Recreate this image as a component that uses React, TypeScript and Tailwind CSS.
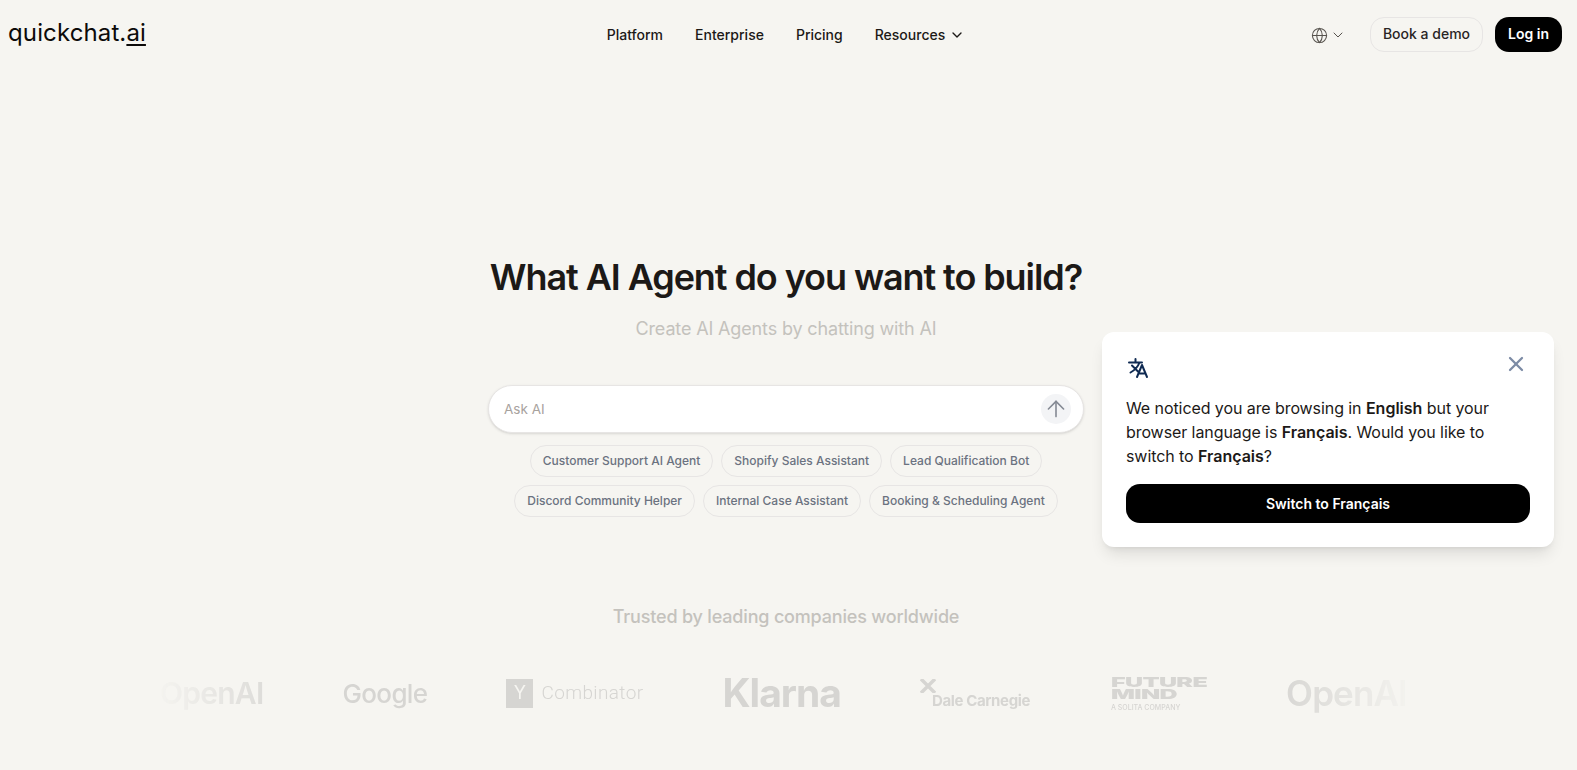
import { ArrowUp, ChevronDown, Globe, X } from "lucide-react";

const navLinks = ["Platform", "Enterprise", "Pricing"];

const promptRows = [
  ["Customer Support AI Agent", "Shopify Sales Assistant", "Lead Qualification Bot"],
  ["Discord Community Helper", "Internal Case Assistant", "Booking & Scheduling Agent"],
];

function Header() {
  return (
    <header className="grid h-[70px] grid-cols-[1fr_auto_1fr] items-center pl-2 pr-[15px]">
      <div className="-mt-1 text-[24px] leading-none tracking-[0.005em] text-[#0c0a09]">
        quickchat.<span className="underline decoration-2 underline-offset-[3px]">ai</span>
      </div>
      <nav className="ml-0.5 flex items-center gap-8 text-sm font-medium text-[#1c1917]">
        {navLinks.map((link) => (
          <a key={link}>{link}</a>
        ))}
        <a className="flex items-center gap-1">
          Resources
          <ChevronDown className="h-4 w-4" />
        </a>
      </nav>
      <div className="flex items-center justify-end">
        <div className="mr-6 flex items-center gap-0.5 text-[#57534e]">
          <Globe className="h-[17px] w-[17px]" strokeWidth={1.5} />
          <ChevronDown className="h-4 w-4" strokeWidth={1.5} />
        </div>
        <button
          type="button"
          className="-mt-0.5 mr-3 h-[35px] rounded-[14px] border border-[#e7e5e4] px-3 text-sm font-medium text-[#292524]"
        >
          Book a demo
        </button>
        <button
          type="button"
          className="-mt-0.5 h-[35px] rounded-[14px] bg-black px-[13px] text-sm font-semibold text-white"
        >
          Log in
        </button>
      </div>
    </header>
  );
}

function Hero() {
  return (
    <section className="mr-[5px] mt-[187px] flex flex-col items-center">
      <h1 className="text-[36px] font-semibold leading-10 tracking-[-0.03em] text-[#1c1917]">
        What AI Agent do you want to build?
      </h1>
      <p className="mt-[18px] text-lg leading-7 tracking-[-0.008em] text-[#c4c2bd]">
        Create AI Agents by chatting with AI
      </p>
      <div className="mt-[42px] flex h-[48px] w-[596px] items-center justify-between rounded-full border border-[#e7e5e4] bg-white pl-[15px] pr-3 shadow-sm">
        <span className="text-[13.5px] text-[#a8a29e]">Ask AI</span>
        <span className="flex h-[30px] w-[30px] items-center justify-center rounded-full bg-[#f3f4f6] text-[#858a94]">
          <ArrowUp className="h-[26px] w-[26px] shrink-0" strokeWidth={1.5} />
        </span>
      </div>
      <div className="mt-3 flex flex-col gap-2">
        {promptRows.map((row) => (
          <div key={row[0]} className="flex justify-center gap-2">
            {row.map((prompt) => (
              <span
                key={prompt}
                className="flex h-8 items-center rounded-full border border-[#e7e5e4] px-3 text-xs font-medium text-[#6b7280]"
              >
                {prompt}
              </span>
            ))}
          </div>
        ))}
      </div>
    </section>
  );
}

function LogoStrip() {
  return (
    <section className="mr-[5px] mt-[86px] flex flex-col items-center">
      <p className="text-lg font-medium leading-7 tracking-[-0.01em] text-[#c4c2bd]">
        Trusted by leading companies worldwide
      </p>
      <div className="mt-[37px] flex h-[50px] w-[1290px] items-center gap-[79px] overflow-hidden pl-[19px] text-[#d6d5d2] [mask-image:linear-gradient(to_right,transparent_1%,black_12%,black_88%,transparent_99%)]">
        <span className="shrink-0 text-[30px] font-semibold tracking-tight">OpenAI</span>
        <span className="shrink-0 text-[26px] font-medium tracking-tight">Google</span>
        <span className="flex shrink-0 items-center gap-2">
          <span className="flex h-[29px] w-[27px] items-center justify-center bg-[#d6d5d2] text-lg text-[#f6f5f1]">Y</span>
          <span className="font-['Roboto',sans-serif] text-[19px] font-light tracking-[0.02em]">Combinator</span>
        </span>
        <span className="shrink-0 text-[39px] font-bold tracking-tight">Klarna</span>
        <span className="flex shrink-0 flex-col text-[15px] font-bold leading-none tracking-tight">
          <svg viewBox="0 0 16 14" className="h-3.5 w-4" fill="none" stroke="currentColor" strokeWidth={3.5}>
            <path d="M1 0l14 14M15 0L1 14" />
          </svg>
          <span className="pl-3">Dale Carnegie</span>
        </span>
        <span className="ml-[2px] flex shrink-0 flex-col font-black leading-none">
          <span className="h-3 scale-y-[0.55] text-[25px] leading-3 tracking-tight">FUTURE</span>
          <span className="h-3 scale-y-[0.55] text-[25px] leading-3 tracking-tight">MIND</span>
          <span className="mt-1 text-[7px] font-medium">A SOLITA COMPANY</span>
        </span>
        <span className="shrink-0 text-[35px] font-semibold tracking-tight">OpenAI</span>
      </div>
    </section>
  );
}

function LanguagePopup() {
  return (
    <div className="absolute left-[1102px] top-[332px] w-[452px] rounded-xl bg-white p-6 shadow-lg">
      <div className="mb-4 flex items-start justify-between">
        <svg
          viewBox="0 0 24 24"
          className="h-6 w-6 text-[#0f2a52]"
          fill="none"
          stroke="currentColor"
          strokeWidth={2}
          strokeLinecap="round"
          strokeLinejoin="round"
        >
          <path d="M3 6.5h13M9.5 3v3.5M6 9.5l6 6M13.5 6.5c-1.5 4-4.5 7.5-9 10M11 21l5-12 5 12M12.8 17.5h6.4" />
        </svg>
        <button type="button" className="-mt-1 mr-[2px] text-[#7c8ba5]">
          <X className="h-6 w-6" strokeWidth={2.25} />
        </button>
      </div>
      <p className="text-base leading-6 tracking-[-0.005em] text-[#1c1917]">
        We noticed you are browsing in <strong className="font-semibold tracking-normal">English</strong> but your browser language is{" "}
        <strong className="font-semibold tracking-normal">Français</strong>. Would you like to switch to{" "}
        <strong className="font-semibold tracking-normal">Français</strong>?
      </p>
      <button
        type="button"
        className="mt-4 h-[39px] w-full rounded-[14px] bg-black text-sm font-semibold text-white"
      >
        Switch to Français
      </button>
    </div>
  );
}

export default function App() {
  return (
    <div className="relative h-[770px] overflow-hidden bg-[#f6f5f1] font-['Inter',sans-serif]">
      <Header />
      <Hero />
      <LogoStrip />
      <LanguagePopup />
    </div>
  );
}
